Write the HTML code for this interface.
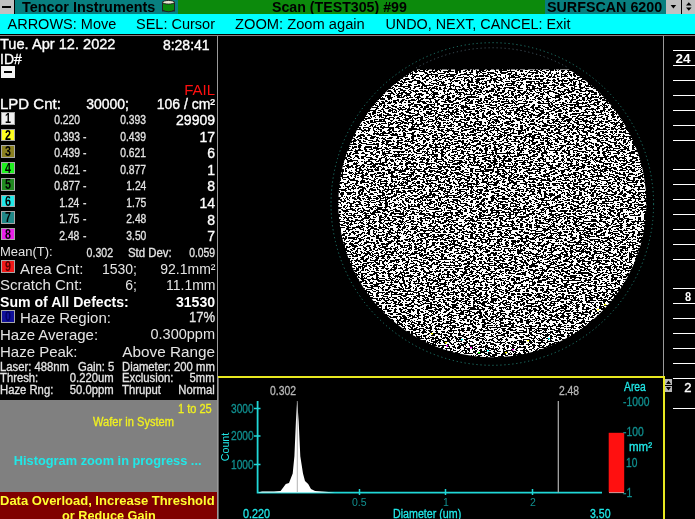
<!DOCTYPE html>
<html><head><meta charset="utf-8"><title>Surfscan 6200</title>
<style>
html,body{margin:0;padding:0;background:#000;}
body{width:695px;height:519px;position:relative;overflow:hidden;will-change:transform;font-family:"Liberation Sans",sans-serif;}
.t{position:absolute;white-space:pre;line-height:1;}
.r{position:absolute;}
.bx{position:absolute;left:1px;width:13.5px;height:12.8px;box-sizing:border-box;border:1px solid #a8a8a8;font-size:14.5px;line-height:11px;text-align:center;color:#000;font-weight:bold;}
.bx span{display:inline-block;transform:scaleX(0.74);}
</style></head><body>

<div class="r" style="left:0;top:0;width:695px;height:14px;background:#0c8a0c;"></div>
<div class="r" style="left:0;top:0;width:14px;height:14px;background:#c0c0c0;"></div>
<div class="r" style="left:2px;top:6px;width:9px;height:2px;background:#000;"></div>
<div class="r" style="left:14px;top:0;width:1px;height:14px;background:#000;"></div>
<div class="r" style="left:15px;top:0;width:163px;height:14px;background:#087f7f;"></div>
<div class="r" style="left:545px;top:0;width:121px;height:14px;background:#087f7f;"></div>
<div class="r" style="left:666px;top:0;width:15px;height:14px;background:#c0c0c0;"></div>
<div class="r" style="left:681px;top:0;width:1px;height:14px;background:#000;"></div>
<div class="r" style="left:682px;top:0;width:13px;height:14px;background:#c0c0c0;"></div>
<div class="t" style="left:22px;top:0.01px;font-size:14.4px;color:#000;font-weight:bold;">Tencor Instruments</div>
<div class="t" style="left:272px;top:0.18px;font-size:14.2px;color:#000;font-weight:bold;">Scan (TEST305) #99</div>
<div class="t" style="left:547px;top:0.10px;font-size:14.3px;color:#000;font-weight:bold;">SURFSCAN 6200</div>
<svg class="r" style="left:161px;top:0" width="16" height="14" viewBox="0 0 16 14"><rect x="1.5" y="2" width="12" height="9" fill="#0a8a0a" stroke="#222" stroke-width="1"/><ellipse cx="7.5" cy="2.3" rx="6" ry="1.8" fill="#e8e8d0" stroke="#222" stroke-width="1"/><path d="M1.5 10 Q7.5 13.5 13.5 10" fill="#0a8a0a" stroke="#222" stroke-width="1"/></svg>
<svg class="r" style="left:666px;top:0" width="29" height="14" viewBox="0 0 29 14"><path d="M4.6 5h5.6l-2.8 3.4z" fill="#000"/><path d="M20 5.6l2.8-3.4l2.8 3.4z M20 7.4h5.6l-2.8 3.4z" fill="#000"/></svg>
<div class="r" style="left:0;top:14px;width:695px;height:19.8px;background:#00ffff;"></div>
<div class="r" style="left:0;top:34.9px;width:695px;height:1.2px;background:#8c8484;"></div>
<div class="t" style="left:7.5px;top:16.73px;font-size:14.5px;color:#000;">ARROWS: Move</div>
<div class="t" style="left:136px;top:16.73px;font-size:14.5px;color:#000;">SEL: Cursor</div>
<div class="t" style="left:235px;top:16.56px;font-size:14.7px;color:#000;">ZOOM: Zoom again</div>
<div class="t" style="left:385.5px;top:16.85px;font-size:14.35px;color:#000;">UNDO, NEXT, CANCEL: Exit</div>
<div class="r" style="left:216.9px;top:36px;width:1.2px;height:483px;background:#9a9a9a;"></div>
<div class="t" style="left:0px;top:37.34px;font-size:14.6px;color:#fff;-webkit-text-stroke:0.35px;">Tue. Apr 12. 2022</div>
<div class="t" style="right:485.4px;top:37.85px;font-size:14.0px;color:#fff;-webkit-text-stroke:0.35px;">8:28:41</div>
<div class="t" style="left:0px;top:51.75px;font-size:14px;color:#fff;-webkit-text-stroke:0.35px;">ID#</div>
<div class="r" style="left:1px;top:66px;width:14px;height:12px;background:#f4f4f4;"></div><div class="r" style="left:4px;top:71px;width:8px;height:2px;background:#000;"></div>
<div class="t" style="right:480px;top:81.70px;font-size:15px;color:#ff1010;">FAIL</div>
<div class="t" style="left:0px;top:96.10px;font-size:15px;color:#fff;-webkit-text-stroke:0.35px;">LPD Cnt:</div>
<div class="t" style="right:566px;top:96.95px;font-size:14px;color:#fff;-webkit-text-stroke:0.35px;">30000;</div>
<div class="t" style="right:480px;top:96.95px;font-size:14px;color:#fff;-webkit-text-stroke:0.35px;">106 / cm²</div>
<div class="bx" style="top:112.0px;background:#f0f0f0;"><span>1</span></div>
<div class="t" style="right:615.2px;top:114.24px;font-size:12px;color:#e4e4e4;transform:scaleX(0.86);transform-origin:right center;-webkit-text-stroke:0.3px;">0.220</div>
<div class="t" style="right:549px;top:114.24px;font-size:12px;color:#e4e4e4;transform:scaleX(0.86);transform-origin:right center;-webkit-text-stroke:0.3px;">0.393</div>
<div class="t" style="right:480px;top:113.45px;font-size:14px;color:#fff;-webkit-text-stroke:0.35px;">29909</div>
<div class="bx" style="top:128.5px;background:#ffff20;"><span>2</span></div>
<div class="t" style="right:615.2px;top:130.75px;font-size:12px;color:#e4e4e4;transform:scaleX(0.86);transform-origin:right center;-webkit-text-stroke:0.3px;">0.393</div>
<div class="t" style="left:82.5px;top:130.75px;font-size:12px;color:#e4e4e4;transform:scaleX(0.86);transform-origin:left center;-webkit-text-stroke:0.3px;">-</div>
<div class="t" style="right:549px;top:130.75px;font-size:12px;color:#e4e4e4;transform:scaleX(0.86);transform-origin:right center;-webkit-text-stroke:0.3px;">0.439</div>
<div class="t" style="right:480px;top:129.96px;font-size:14px;color:#fff;-webkit-text-stroke:0.35px;">17</div>
<div class="bx" style="top:145.0px;background:#8a8020;"><span>3</span></div>
<div class="t" style="right:615.2px;top:147.26px;font-size:12px;color:#e4e4e4;transform:scaleX(0.86);transform-origin:right center;-webkit-text-stroke:0.3px;">0.439</div>
<div class="t" style="left:82.5px;top:147.26px;font-size:12px;color:#e4e4e4;transform:scaleX(0.86);transform-origin:left center;-webkit-text-stroke:0.3px;">-</div>
<div class="t" style="right:549px;top:147.26px;font-size:12px;color:#e4e4e4;transform:scaleX(0.86);transform-origin:right center;-webkit-text-stroke:0.3px;">0.621</div>
<div class="t" style="right:480px;top:146.47px;font-size:14px;color:#fff;-webkit-text-stroke:0.35px;">6</div>
<div class="bx" style="top:161.5px;background:#20f020;"><span>4</span></div>
<div class="t" style="right:615.2px;top:163.77px;font-size:12px;color:#e4e4e4;transform:scaleX(0.86);transform-origin:right center;-webkit-text-stroke:0.3px;">0.621</div>
<div class="t" style="left:82.5px;top:163.77px;font-size:12px;color:#e4e4e4;transform:scaleX(0.86);transform-origin:left center;-webkit-text-stroke:0.3px;">-</div>
<div class="t" style="right:549px;top:163.77px;font-size:12px;color:#e4e4e4;transform:scaleX(0.86);transform-origin:right center;-webkit-text-stroke:0.3px;">0.877</div>
<div class="t" style="right:480px;top:162.98px;font-size:14px;color:#fff;-webkit-text-stroke:0.35px;">1</div>
<div class="bx" style="top:178.0px;background:#208a20;"><span>5</span></div>
<div class="t" style="right:615.2px;top:180.28px;font-size:12px;color:#e4e4e4;transform:scaleX(0.86);transform-origin:right center;-webkit-text-stroke:0.3px;">0.877</div>
<div class="t" style="left:82.5px;top:180.28px;font-size:12px;color:#e4e4e4;transform:scaleX(0.86);transform-origin:left center;-webkit-text-stroke:0.3px;">-</div>
<div class="t" style="right:549px;top:180.28px;font-size:12px;color:#e4e4e4;transform:scaleX(0.86);transform-origin:right center;-webkit-text-stroke:0.3px;">1.24</div>
<div class="t" style="right:480px;top:179.49px;font-size:14px;color:#fff;-webkit-text-stroke:0.35px;">8</div>
<div class="bx" style="top:194.6px;background:#20e8e8;"><span>6</span></div>
<div class="t" style="right:615.2px;top:196.79px;font-size:12px;color:#e4e4e4;transform:scaleX(0.86);transform-origin:right center;-webkit-text-stroke:0.3px;">1.24</div>
<div class="t" style="left:82.5px;top:196.79px;font-size:12px;color:#e4e4e4;transform:scaleX(0.86);transform-origin:left center;-webkit-text-stroke:0.3px;">-</div>
<div class="t" style="right:549px;top:196.79px;font-size:12px;color:#e4e4e4;transform:scaleX(0.86);transform-origin:right center;-webkit-text-stroke:0.3px;">1.75</div>
<div class="t" style="right:480px;top:196.00px;font-size:14px;color:#fff;-webkit-text-stroke:0.35px;">14</div>
<div class="bx" style="top:211.1px;background:#208888;"><span>7</span></div>
<div class="t" style="right:615.2px;top:213.30px;font-size:12px;color:#e4e4e4;transform:scaleX(0.86);transform-origin:right center;-webkit-text-stroke:0.3px;">1.75</div>
<div class="t" style="left:82.5px;top:213.30px;font-size:12px;color:#e4e4e4;transform:scaleX(0.86);transform-origin:left center;-webkit-text-stroke:0.3px;">-</div>
<div class="t" style="right:549px;top:213.30px;font-size:12px;color:#e4e4e4;transform:scaleX(0.86);transform-origin:right center;-webkit-text-stroke:0.3px;">2.48</div>
<div class="t" style="right:480px;top:212.51px;font-size:14px;color:#fff;-webkit-text-stroke:0.35px;">8</div>
<div class="bx" style="top:227.6px;background:#e820e8;"><span>8</span></div>
<div class="t" style="right:615.2px;top:229.81px;font-size:12px;color:#e4e4e4;transform:scaleX(0.86);transform-origin:right center;-webkit-text-stroke:0.3px;">2.48</div>
<div class="t" style="left:82.5px;top:229.81px;font-size:12px;color:#e4e4e4;transform:scaleX(0.86);transform-origin:left center;-webkit-text-stroke:0.3px;">-</div>
<div class="t" style="right:549px;top:229.81px;font-size:12px;color:#e4e4e4;transform:scaleX(0.86);transform-origin:right center;-webkit-text-stroke:0.3px;">3.50</div>
<div class="t" style="right:480px;top:229.02px;font-size:14px;color:#fff;-webkit-text-stroke:0.35px;">7</div>
<div class="t" style="left:0px;top:246.42px;font-size:12.5px;color:#e4e4e4;transform:scaleX(1.04);transform-origin:left center;">Mean(T):</div>
<div class="t" style="right:582.2px;top:246.84px;font-size:12px;color:#e4e4e4;transform:scaleX(0.88);transform-origin:right center;-webkit-text-stroke:0.3px;">0.302</div>
<div class="t" style="left:128px;top:246.84px;font-size:12px;color:#e4e4e4;transform:scaleX(0.95);transform-origin:left center;-webkit-text-stroke:0.3px;">Std Dev:</div>
<div class="t" style="right:480px;top:246.84px;font-size:12px;color:#e4e4e4;transform:scaleX(0.86);transform-origin:right center;-webkit-text-stroke:0.3px;">0.059</div>
<div class="bx" style="top:260.3px;background:#f01818;color:#500;"><span>9</span></div>
<div class="t" style="left:20px;top:260.80px;font-size:15px;color:#e4e4e4;">Area Cnt:</div>
<div class="t" style="right:558px;top:261.65px;font-size:14px;color:#e4e4e4;">1530;</div>
<div class="t" style="right:479.5px;top:261.65px;font-size:14px;color:#e4e4e4;">92.1mm²</div>
<div class="t" style="left:0px;top:276.90px;font-size:15px;color:#e4e4e4;">Scratch Cnt:</div>
<div class="t" style="right:558px;top:277.75px;font-size:14px;color:#e4e4e4;">6;</div>
<div class="t" style="right:479.5px;top:277.75px;font-size:14px;color:#e4e4e4;">11.1mm</div>
<div class="t" style="left:0px;top:293.88px;font-size:15.5px;color:#fff;font-weight:bold;transform:scaleX(0.91);transform-origin:left center;">Sum of All Defects:</div>
<div class="t" style="right:480px;top:293.88px;font-size:15.5px;color:#fff;font-weight:bold;transform:scaleX(0.91);transform-origin:right center;">31530</div>
<div class="bx" style="top:309.8px;height:13.2px;background:#10109a;color:#006;"><span>0</span></div>
<div class="t" style="left:20px;top:309.90px;font-size:15px;color:#e4e4e4;">Haze Region:</div>
<div class="t" style="right:480px;top:310.33px;font-size:14.5px;color:#e4e4e4;transform:scaleX(0.9);transform-origin:right center;-webkit-text-stroke:0.3px;">17%</div>
<div class="t" style="left:0px;top:326.70px;font-size:15px;color:#e4e4e4;">Haze Average:</div>
<div class="t" style="right:480px;top:327.13px;font-size:14.5px;color:#e4e4e4;">0.300ppm</div>
<div class="t" style="left:0px;top:343.50px;font-size:15px;color:#e4e4e4;">Haze Peak:</div>
<div class="t" style="right:480px;top:343.75px;font-size:15.3px;color:#e4e4e4;">Above Range</div>
<div class="t" style="left:0px;top:360.64px;font-size:12px;color:#e4e4e4;transform:scaleX(0.94);transform-origin:left center;-webkit-text-stroke:0.3px;">Laser: 488nm</div>
<div class="t" style="left:78px;top:360.64px;font-size:12px;color:#e4e4e4;transform:scaleX(0.94);transform-origin:left center;-webkit-text-stroke:0.3px;">Gain: 5</div>
<div class="t" style="left:122px;top:360.64px;font-size:12px;color:#e4e4e4;transform:scaleX(0.94);transform-origin:left center;-webkit-text-stroke:0.3px;">Diameter: 200 mm</div>
<div class="t" style="left:0px;top:372.04px;font-size:12px;color:#e4e4e4;transform:scaleX(0.94);transform-origin:left center;-webkit-text-stroke:0.3px;">Thresh:</div>
<div class="t" style="right:581px;top:372.04px;font-size:12px;color:#e4e4e4;transform:scaleX(0.94);transform-origin:right center;-webkit-text-stroke:0.3px;">0.220um</div>
<div class="t" style="left:122px;top:372.04px;font-size:12px;color:#e4e4e4;transform:scaleX(0.94);transform-origin:left center;-webkit-text-stroke:0.3px;">Exclusion:</div>
<div class="t" style="right:480px;top:372.04px;font-size:12px;color:#e4e4e4;transform:scaleX(0.94);transform-origin:right center;-webkit-text-stroke:0.3px;">5mm</div>
<div class="t" style="left:0px;top:383.64px;font-size:12px;color:#e4e4e4;transform:scaleX(0.94);transform-origin:left center;-webkit-text-stroke:0.3px;">Haze Rng:</div>
<div class="t" style="right:581px;top:383.64px;font-size:12px;color:#e4e4e4;transform:scaleX(0.94);transform-origin:right center;-webkit-text-stroke:0.3px;">50.0ppm</div>
<div class="t" style="left:122px;top:383.64px;font-size:12px;color:#e4e4e4;transform:scaleX(0.94);transform-origin:left center;-webkit-text-stroke:0.3px;">Thruput</div>
<div class="t" style="right:480px;top:383.64px;font-size:12px;color:#e4e4e4;transform:scaleX(0.94);transform-origin:right center;-webkit-text-stroke:0.3px;">Normal</div>
<div class="r" style="left:0;top:399.5px;width:217px;height:93px;background:#808080;"></div>
<div class="r" style="left:0;top:492px;width:217px;height:27px;background:#800000;"></div>
<div class="t" style="right:483.5px;top:403.14px;font-size:12px;color:#f0f020;transform:scaleX(0.92);transform-origin:right center;-webkit-text-stroke:0.3px;">1 to 25</div>
<div class="t" style="left:92.5px;top:416.44px;font-size:12px;color:#f0f020;transform:scaleX(0.925);transform-origin:left center;-webkit-text-stroke:0.3px;">Wafer in System</div>
<div class="t" style="left:13.8px;top:454.56px;font-size:12.8px;color:#20e8e8;font-weight:bold;">Histogram zoom in progress ...</div>
<div class="t" style="left:0px;top:493.50px;font-size:13px;color:#ffff30;font-weight:bold;">Data Overload, Increase Threshold</div>
<div class="t" style="left:62px;top:509.75px;font-size:12.7px;color:#ffff30;font-weight:bold;">or Reduce Gain</div>
<svg class="r" style="left:218px;top:36px" width="445" height="341" viewBox="218 36 445 341">
<defs>
<filter id="nz" x="0" y="0" width="100%" height="100%" color-interpolation-filters="sRGB">
<feTurbulence type="fractalNoise" baseFrequency="0.34 0.66" numOctaves="2" seed="7" result="n"/>
<feColorMatrix type="matrix" values="0 0 0 0 0  0 0 0 0 0  0 0 0 0 0  1.2 1.2 0 0 -0.7"/>
<feComponentTransfer><feFuncA type="discrete" tableValues="0 0 0 0 0 0 0 0 0 0 1 1 1 1 1 1 1 1 1 1"/></feComponentTransfer>
<feColorMatrix type="matrix" values="0 0 0 0 1  0 0 0 0 1  0 0 0 0 1  0 0 0 1 0"/>
</filter>
<clipPath id="wf"><path d="M416 69.5 H568.6 A154 154 0 1 1 416 69.5 Z"/></clipPath>
</defs>
<circle cx="492.3" cy="204" r="161.3" fill="none" stroke="#2aa090" stroke-width="1" stroke-dasharray="1.2 2.8" opacity="0.75"/>
<path d="M416 68 A154 154 0 0 1 568.6 68" fill="none" stroke="#7090a0" stroke-width="1" stroke-dasharray="1.2 2.8" opacity="0.55"/>
<g clip-path="url(#wf)"><rect x="335" y="50" width="315" height="312" fill="#000"/><rect x="335" y="50" width="315" height="312" filter="url(#nz)"/><rect x="445" y="342" width="2" height="1.3" fill="#ff0"/><rect x="446" y="345" width="2" height="1.3" fill="#f0f"/><rect x="470" y="347" width="2" height="1.3" fill="#f0f"/><rect x="487" y="350" width="2" height="1.3" fill="#0ff"/><rect x="505" y="352" width="2" height="1.3" fill="#ff0"/><rect x="527" y="340" width="2" height="1.3" fill="#ff0"/><rect x="604" y="304" width="2" height="1.3" fill="#ff0"/><rect x="597" y="309" width="2" height="1.3" fill="#ff0"/><rect x="461" y="339" width="2" height="1.3" fill="#0ff"/><rect x="478" y="352" width="2" height="1.3" fill="#0f0"/><rect x="512" y="349" width="2" height="1.3" fill="#f0f"/><rect x="431" y="333" width="2" height="1.3" fill="#ff0"/><rect x="548" y="338" width="2" height="1.3" fill="#0ff"/></g>
</svg>
<div class="r" style="left:662.9px;top:36px;width:1.2px;height:342px;background:#9a9a9a;"></div>
<div class="r" style="left:673px;top:49.5px;width:22px;height:1.3px;background:#fff;"></div>
<div class="r" style="left:673px;top:64.5px;width:22px;height:1.3px;background:#fff;"></div>
<div class="r" style="left:673px;top:79.5px;width:22px;height:1.3px;background:#fff;"></div>
<div class="r" style="left:673px;top:94.5px;width:22px;height:1.3px;background:#fff;"></div>
<div class="r" style="left:673px;top:109.5px;width:22px;height:1.3px;background:#fff;"></div>
<div class="r" style="left:673px;top:124.5px;width:22px;height:1.3px;background:#fff;"></div>
<div class="r" style="left:673px;top:139.8px;width:22px;height:1.3px;background:#fff;"></div>
<div class="r" style="left:673px;top:168.8px;width:22px;height:1.3px;background:#fff;"></div>
<div class="r" style="left:673px;top:184.0px;width:22px;height:1.3px;background:#fff;"></div>
<div class="r" style="left:673px;top:199.0px;width:22px;height:1.3px;background:#fff;"></div>
<div class="r" style="left:673px;top:214.0px;width:22px;height:1.3px;background:#fff;"></div>
<div class="r" style="left:673px;top:228.5px;width:22px;height:1.3px;background:#fff;"></div>
<div class="r" style="left:673px;top:243.5px;width:22px;height:1.3px;background:#fff;"></div>
<div class="r" style="left:673px;top:258.5px;width:22px;height:1.3px;background:#fff;"></div>
<div class="r" style="left:673px;top:287.5px;width:22px;height:1.3px;background:#fff;"></div>
<div class="r" style="left:673px;top:302.5px;width:22px;height:1.3px;background:#fff;"></div>
<div class="r" style="left:673px;top:317.5px;width:22px;height:1.3px;background:#fff;"></div>
<div class="r" style="left:673px;top:332.5px;width:22px;height:1.3px;background:#fff;"></div>
<div class="r" style="left:673px;top:347.5px;width:22px;height:1.3px;background:#fff;"></div>
<div class="r" style="left:673px;top:362.5px;width:22px;height:1.3px;background:#fff;"></div>
<div class="r" style="left:673px;top:378.0px;width:22px;height:1.3px;background:#fff;"></div>
<div class="r" style="left:673px;top:407.5px;width:22px;height:1.3px;background:#fff;"></div>
<div class="t" style="left:675.5px;top:52.37px;font-size:13.5px;color:#fff;font-weight:bold;">24</div>
<div class="t" style="left:684.6px;top:290.37px;font-size:13.5px;color:#fff;font-weight:bold;transform:scaleX(0.82);transform-origin:left center;">8</div>
<div class="t" style="left:684.3px;top:380.60px;font-size:13px;color:#fff;-webkit-text-stroke:0.4px;">2</div>
<div class="r" style="left:665px;top:379px;width:7px;height:13px;background:#b8b8b8;"></div>
<svg class="r" style="left:665px;top:379px" width="7" height="13" viewBox="0 0 7 13"><path d="M1 5l2.5-3.5L6 5z M1 8h5l-2.5 3.5z" fill="#000"/><rect x="0" y="6" width="7" height="1" fill="#000"/></svg>
<div class="r" style="left:218px;top:376px;width:446px;height:2px;background:#e8e820;"></div>
<div class="r" style="left:662.5px;top:376px;width:2px;height:143px;background:#e8e820;"></div>
<div class="r" style="left:218px;top:378px;width:1px;height:141px;background:#606060;"></div>
<svg class="r" style="left:218px;top:378px" width="445" height="141" viewBox="218 378 445 141">
<path d="M257.6 401 V492.6 H602" fill="none" stroke="#20d8d8" stroke-width="1.8"/>
<path d="M254 408.5h6.5 M254 436h6.5 M254 464.5h6.5 M359.5 489v6 M445.5 489v6 M532.5 489v6" stroke="#20d8d8" stroke-width="1.5"/>
<path d="M609 492.5H624" stroke="#c0c0c0" stroke-width="1.2"/>
<path d="M258 492.5 L262 491.6 L274 491.4 L280.6 490.9 L285.8 484 L289 483 L292.7 473.6 L294.4 456.3 L295.9 421.8 L296.7 408 L297.2 401 L297.7 408 L298.7 421.8 L300.3 456.3 L303 473.6 L305 481 L308.2 484 L311 489 L315.1 490.9 L322 491.6 L335 492.5 Z" fill="#fff"/>
<path d="M297.3 401V492" stroke="#a0a0a0" stroke-width="0.8"/>
<path d="M558.3 401V492.5" stroke="#b0b0b0" stroke-width="1.2"/>
<rect x="608.7" y="432.8" width="15.5" height="59.5" fill="#ff1010"/>
</svg>
<div class="t" style="left:270px;top:385.14px;font-size:12px;color:#b8b8b8;transform:scaleX(0.866);transform-origin:left center;-webkit-text-stroke:0.3px;">0.302</div>
<div class="t" style="left:558.6px;top:385.14px;font-size:12px;color:#b8b8b8;transform:scaleX(0.86);transform-origin:left center;-webkit-text-stroke:0.3px;">2.48</div>
<div class="t" style="right:441.6px;top:402.54px;font-size:12px;color:#109090;transform:scaleX(0.85);transform-origin:right center;-webkit-text-stroke:0.3px;">3000</div>
<div class="t" style="right:441.6px;top:430.04px;font-size:12px;color:#109090;transform:scaleX(0.85);transform-origin:right center;-webkit-text-stroke:0.3px;">2000</div>
<div class="t" style="right:441.6px;top:458.64px;font-size:12px;color:#109090;transform:scaleX(0.85);transform-origin:right center;-webkit-text-stroke:0.3px;">1000</div>
<div class="t" style="left:352px;top:497.11px;font-size:10.5px;color:#109090;">0.5</div>
<div class="t" style="left:443px;top:497.11px;font-size:10.5px;color:#109090;">1</div>
<div class="t" style="left:530px;top:497.11px;font-size:10.5px;color:#109090;">2</div>
<div class="t" style="left:242.6px;top:508.14px;font-size:12px;color:#20e8e8;transform:scaleX(0.9);transform-origin:left center;-webkit-text-stroke:0.3px;">0.220</div>
<div class="t" style="left:393.2px;top:508.14px;font-size:12px;color:#20e8e8;transform:scaleX(0.89);transform-origin:left center;-webkit-text-stroke:0.3px;">Diameter (um)</div>
<div class="t" style="left:590.4px;top:508.14px;font-size:12px;color:#20e8e8;transform:scaleX(0.88);transform-origin:left center;-webkit-text-stroke:0.3px;">3.50</div>
<div class="t" style="left:624.2px;top:381.34px;font-size:12px;color:#20e8e8;transform:scaleX(0.86);transform-origin:left center;-webkit-text-stroke:0.3px;">Area</div>
<div class="t" style="left:623px;top:395.84px;font-size:12px;color:#109090;transform:scaleX(0.86);transform-origin:left center;-webkit-text-stroke:0.3px;">-1000</div>
<div class="t" style="left:623px;top:426.34px;font-size:12px;color:#109090;transform:scaleX(0.86);transform-origin:left center;-webkit-text-stroke:0.3px;">-100</div>
<div class="t" style="left:629.4px;top:440.54px;font-size:12px;color:#20e8e8;transform:scaleX(0.96);transform-origin:left center;-webkit-text-stroke:0.3px;">mm²</div>
<div class="t" style="left:626px;top:456.64px;font-size:12px;color:#109090;transform:scaleX(0.85);transform-origin:left center;-webkit-text-stroke:0.3px;">10</div>
<div class="t" style="left:623px;top:486.64px;font-size:12px;color:#109090;transform:scaleX(0.86);transform-origin:left center;-webkit-text-stroke:0.3px;">-1</div>
<div class="t" style="left:226.3px;top:446.5px;font-size:11.4px;color:#20e8e8;transform:translate(-50%,-50%) rotate(-90deg) scaleX(0.94);">Count</div>
</body></html>
